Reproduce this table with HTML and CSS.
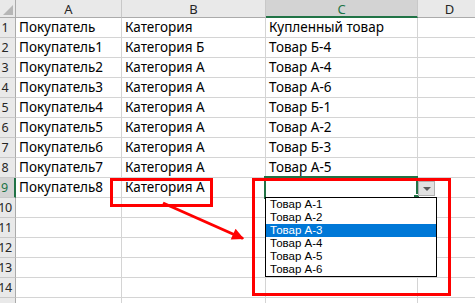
FILE: index.html
```html
<!DOCTYPE html>
<html lang="ru">
<head>
<meta charset="utf-8">
<title>Покупки</title>
<link rel="stylesheet" href="styles.css">
</head>
<body>
<div class="sheet">
  <div class="rh corner"><span class="corner-mark"></span></div>
  <div class="ch">A</div>
  <div class="ch">B</div>
  <div class="ch ch-active">C</div>
  <div class="ch">D</div>

  <div class="rh">1</div><div class="c">Покупатель</div><div class="c">Категория</div><div class="c">Купленный товар</div><div class="c"></div>
  <div class="rh">2</div><div class="c">Покупатель1</div><div class="c">Категория Б</div><div class="c">Товар Б-4</div><div class="c"></div>
  <div class="rh">3</div><div class="c">Покупатель2</div><div class="c">Категория А</div><div class="c">Товар А-4</div><div class="c"></div>
  <div class="rh">4</div><div class="c">Покупатель3</div><div class="c">Категория А</div><div class="c">Товар А-6</div><div class="c"></div>
  <div class="rh">5</div><div class="c">Покупатель4</div><div class="c">Категория А</div><div class="c">Товар Б-1</div><div class="c"></div>
  <div class="rh">6</div><div class="c">Покупатель5</div><div class="c">Категория А</div><div class="c">Товар А-2</div><div class="c"></div>
  <div class="rh">7</div><div class="c">Покупатель6</div><div class="c">Категория А</div><div class="c">Товар Б-3</div><div class="c"></div>
  <div class="rh">8</div><div class="c">Покупатель7</div><div class="c">Категория А</div><div class="c">Товар А-5</div><div class="c"></div>
  <div class="rh rh-active">9</div><div class="c">Покупатель8</div><div class="c">Категория А</div>
  <div class="c c-active">
    <div class="selection"><span class="fill-handle"></span></div>
    <div class="dd-button"><span class="dd-tri"></span></div>
    <ul class="dd-list">
      <li>Товар А-1</li>
      <li>Товар А-2</li>
      <li class="dd-hl">Товар А-3</li>
      <li>Товар А-4</li>
      <li>Товар А-5</li>
      <li>Товар А-6</li>
    </ul>
  </div>
  <div class="c"></div>
  <div class="rh">10</div><div class="c"></div><div class="c"></div><div class="c"></div><div class="c"></div>
  <div class="rh">11</div><div class="c"></div><div class="c"></div><div class="c"></div><div class="c"></div>
  <div class="rh">12</div><div class="c"></div><div class="c"></div><div class="c"></div><div class="c"></div>
  <div class="rh">13</div><div class="c"></div><div class="c"></div><div class="c"></div><div class="c"></div>
  <div class="rh">14</div><div class="c"></div><div class="c"></div><div class="c"></div><div class="c"></div>
  <div class="rh">15</div><div class="c"></div><div class="c"></div><div class="c"></div><div class="c"></div>
</div>

<svg class="marks" width="475" height="303" viewBox="0 0 475 303">
  <defs>
    <marker id="head" viewBox="0 0 10 10" refX="9" refY="5" markerWidth="5" markerHeight="4" orient="auto" markerUnits="strokeWidth">
      <path d="M0 0 L10 5 L0 10 Z" fill="#ff0000"/>
    </marker>
  </defs>
  <rect x="111.5" y="179.5" width="100" height="26" fill="none" stroke="#ff0000" stroke-width="3"/>
  <rect x="253.5" y="179.5" width="196" height="115" fill="none" stroke="#ff0000" stroke-width="3"/>
  <line x1="163" y1="203" x2="243" y2="238.5" stroke="#ff0000" stroke-width="3" marker-end="url(#head)"/>
</svg>
</body>
</html>
```
FILE: styles.css
```css
html, body {
  margin: 0;
  padding: 0;
  background: #ffffff;
  overflow: hidden;
}

body {
  width: 475px;
  height: 303px;
  position: relative;
  font-family: "Noto Sans", "Liberation Sans", sans-serif;
}

.sheet {
  display: grid;
  grid-template-columns: 21px 106px 144px 152px 64px;
  grid-template-rows: 18px;
  grid-auto-rows: 20px;
  margin-left: -5px;
  font-size: 13.5px;
  color: #000;
}

/* column headers */
.ch {
  background: #e9e9e9;
  border-right: 1px solid #c8c8c8;
  border-bottom: 1px solid #ababab;
  box-sizing: border-box;
  display: flex;
  align-items: center;
  justify-content: center;
  color: #262626;
  font-size: 13px;
  padding-top: 1px;
}

.ch-active {
  background: #d3d3d3;
  color: #217346;
  border-bottom: 2px solid #217346;
}

/* row headers */
.rh {
  background: #e9e9e9;
  border-right: 1px solid #ababab;
  border-bottom: 1px solid #c8c8c8;
  box-sizing: border-box;
  display: flex;
  align-items: flex-end;
  justify-content: center;
  padding-bottom: 1px;
  color: #262626;
  font-size: 12.5px;
  letter-spacing: -0.3px;
}

.rh-active {
  background: #d3d3d3;
  color: #217346;
  border-right: 2px solid #217346;
}

.corner {
  position: relative;
  border-bottom: 1px solid #ababab;
}

.corner-mark {
  position: absolute;
  right: 2px;
  bottom: 2px;
  width: 0;
  height: 0;
  border-left: 10px solid transparent;
  border-bottom: 10px solid #b6b6b6;
}

/* cells */
.c {
  border-right: 1px solid #d4d4d4;
  border-bottom: 1px solid #d4d4d4;
  box-sizing: border-box;
  display: flex;
  align-items: flex-end;
  padding: 0 3px 1px 3px;
  white-space: nowrap;
  overflow: visible;
}

.c-active {
  position: relative;
}

.selection {
  position: absolute;
  left: -2px;
  top: -2px;
  width: 154px;
  height: 23px;
  border: 2px solid #217346;
  box-sizing: border-box;
  z-index: 2;
}

.fill-handle {
  position: absolute;
  right: -4px;
  bottom: -4px;
  width: 5px;
  height: 5px;
  background: #217346;
  border: 1px solid #ffffff;
}

.dd-button {
  position: absolute;
  left: 152px;
  top: 3px;
  width: 17px;
  height: 15px;
  box-sizing: border-box;
  background: #e1e1e1;
  border: 1px solid #b0b0b0;
  display: flex;
  align-items: center;
  justify-content: center;
  z-index: 3;
}

.dd-tri {
  width: 0;
  height: 0;
  border-left: 4px solid transparent;
  border-right: 4px solid transparent;
  border-top: 4px solid #5a5a5a;
  margin-top: 1px;
}

.dd-list {
  position: absolute;
  left: -1px;
  top: 19px;
  width: 170px;
  margin: 0;
  padding: 0;
  list-style: none;
  background: #ffffff;
  border: 1px solid #000000;
  z-index: 4;
  font-family: "Liberation Sans", "Noto Sans", sans-serif;
  font-size: 11.5px;
}

.dd-list li {
  height: 13px;
  line-height: 13px;
  padding-left: 4px;
  color: #000;
  overflow: hidden;
}

.dd-list .dd-hl {
  background: #0078d7;
  color: #ffffff;
}

.marks {
  position: absolute;
  left: 0;
  top: 0;
  z-index: 10;
  pointer-events: none;
}
```
